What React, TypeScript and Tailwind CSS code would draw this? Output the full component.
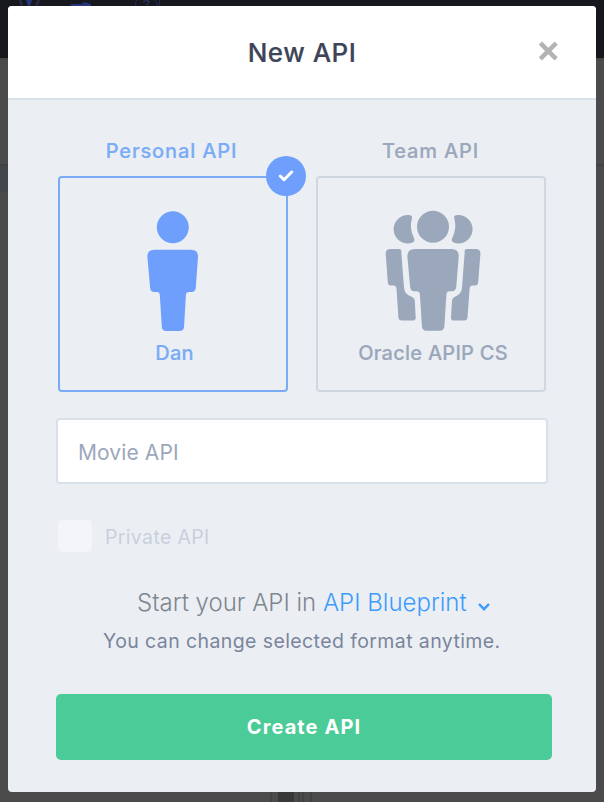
import React from "react";

function PersonIcon() {
  return (
    <svg width="52" height="122" viewBox="0 0 52 122" fill="#6e9ffc">
      <circle cx="25.8" cy="17.3" r="16" />
      <path d="M7.5 39.7H44Q51.4 39.7 51 47L48.8 77.5Q48.3 82 44.6 82H42Q39.1 82 38.9 85L37.1 116.5Q36.8 121 32.5 121H19.3Q15 121 14.8 116.5L12.8 85Q12.6 82 9.8 82H7.3Q3.4 82 3.1 77.5L.4 47Q0 39.7 7.5 39.7Z" />
    </svg>
  );
}

function TeamIcon() {
  return (
    <svg width="96" height="122" viewBox="0 0 96 122" fill="#9ba7bb">
      <circle cx="48" cy="16.8" r="16" />
      <path d="M29.8 39H66.4Q74.2 39 73.7 47L71.3 76.5Q70.8 81.3 67 81.3H64.6Q61.6 81.3 61.4 84.5L59.4 116Q59.1 120.7 54.8 120.7H41.4Q37.2 120.7 36.9 116L34.9 84.5Q34.7 81.3 31.6 81.3H29.4Q25.4 81.3 25.1 76.5L22.4 47Q22 39 29.8 39Z" />
      <path d="M23.5 5Q28.2 5 26.8 9Q24.3 18.5 28.7 27.5Q31 31.3 26.5 32.9A14.2 14.2 0 1 1 23.5 5Z" />
      <path d="M72.7 5Q68 5 69.4 9Q71.9 18.5 67.5 27.5Q65.2 31.3 69.7 32.9A14.2 14.2 0 1 0 72.7 5Z" />
      <path d="M5.2 39H13.5Q17 39 16.3 42.3L19 77.5Q19.5 84.2 26 86.5Q29.6 87.8 29.8 91L30.7 107.5Q30.8 110.5 27.5 110.5H16.8Q13.7 110.5 13.4 107.5L11.5 78.5Q11.3 76 9.2 75.6L5.7 75.4Q3 75.2 2.8 72.2L.7 44Q.5 39 5.2 39Z" />
      <path d="M91 39H82.5Q79 39 79.7 42.3L77 77.5Q76.5 84.2 70.4 86.5Q67.2 87.8 67 91L66 107.5Q65.9 110.5 69.2 110.5H79.2Q82.3 110.5 82.5 107.5L84.6 78.5Q84.8 76 86.8 75.6L90.3 75.4Q93 75.2 93.2 72.2L95.4 44Q95.6 39 91 39Z" />
    </svg>
  );
}

function Backdrop() {
  return (
    <div className="absolute inset-0 flex flex-col overflow-hidden bg-[#4b4b4b]">
      <div className="h-[58px] shrink-0 bg-[#17181d]">
        <svg width="200" height="8" viewBox="0 0 200 8" fill="none" stroke="#202a58">
          <path d="M20 0L22 6M39 0L36 6" stroke="#242942" strokeWidth="3" />
          <path d="M26 0H32L30 6H28Z" fill="#26357c" stroke="none" />
          <path d="M70 4H82L84 2L91 4V6H72Z" fill="#26357c" stroke="none" />
          <path d="M137 0Q134 3 136 6M155 0Q158 3 157 6M159.500 0V6" />
          <path d="M143 2Q145 0 149 1Q149 4 146 5" stroke="#2c3a80" />
        </svg>
      </div>
      <div className="h-[106px] shrink-0 border-t-2 border-[#464646]" />
      <div className="flex h-[28px] shrink-0 justify-between border-t-2 border-[#424242]">
        <div className="w-2 bg-[#42484b]" />
      </div>
      <div className="grow" />
      <div className="flex h-[10px] shrink-0 pl-[270px]">
        <div className="w-[2px] bg-[#434343]" />
        <div className="ml-[6px] w-4 bg-[#383838]" />
        <div className="ml-1 w-[2px] bg-[#424242]" />
        <div className="ml-[2px] w-[2px] bg-[#424242]" />
        <div className="ml-[6px] w-[2px] bg-[#424242]" />
      </div>
    </div>
  );
}

export default function App() {
  return (
    <div className="relative h-[802px] w-[604px] overflow-hidden px-2 pt-[6px] font-['Inter',sans-serif]">
      <Backdrop />
      <div className="relative flex h-[786px] flex-col overflow-hidden rounded-[4px] bg-[#ebeff4]">
        <header className="relative flex h-[94px] shrink-0 items-center justify-center border-b-2 border-[#d8e0e9] bg-white pt-[2px]">
          <h1 className="text-[26px] leading-8 font-medium tracking-[0.5px] text-[#3e4457] [-webkit-text-stroke:0.2px_#3e4457]">New API</h1>
          <button className="absolute top-[35px] right-[38px]" aria-label="Close">
            <svg width="20" height="20" viewBox="0 0 20 20" stroke="#b3b3b3" strokeWidth="4.500" strokeLinecap="square">
              <path d="M4 3.700L16.600 16.300M16.600 3.700L4 16.300" />
            </svg>
          </button>
        </header>

        <main className="flex flex-col px-12">
          <div className="flex gap-7 px-[2px] pt-[36px]">
            <section className="w-[230px]">
              <h2 className="h-10 pr-[3px] text-center text-[20px] leading-[30px] font-medium tracking-[0.85px] text-[#7aacf6] [-webkit-text-stroke:0.2px_#7aacf6]">Personal API</h2>
              <div className="relative flex h-[216px] flex-col items-center rounded-[4px] border-2 border-[#7aacf6] pt-[32px]">
                <PersonIcon />
                <p className="mt-[6px] pl-[3px] text-[20px] leading-[30px] font-medium tracking-[0.2px] text-[#7aacf6] [-webkit-text-stroke:0.2px_#7aacf6]">Dan</p>
                <span className="absolute -top-[22px] -right-[20px] flex size-10 items-center justify-center rounded-full bg-[#6e9ffc]">
                  <svg width="16" height="12" viewBox="0 0 16 12" fill="none" stroke="white" strokeWidth="3" strokeLinecap="round" strokeLinejoin="round">
                    <path d="M2.300 6L6 9.700L13.700 2" />
                  </svg>
                </span>
              </div>
            </section>
            <section className="w-[230px]">
              <h2 className="h-10 pr-[1px] text-center text-[20px] leading-[30px] font-medium tracking-[0.85px] text-[#9ba7bb] [-webkit-text-stroke:0.2px_#9ba7bb]">Team API</h2>
              <div className="flex h-[216px] flex-col items-center rounded-[4px] border-2 border-[#cfd8e1] pt-[32px]">
                <div className="pl-[4px]"><TeamIcon /></div>
                <p className="mt-[6px] pl-[4px] text-[20px] leading-[30px] font-medium tracking-[0.25px] text-[#9ba7bb] [-webkit-text-stroke:0.2px_#9ba7bb]">Oracle APIP CS</p>
              </div>
            </section>
          </div>

          <div className="mt-[26px] flex h-[66px] w-[492px] items-center rounded-[4px] border-2 border-[#d8e0e9] bg-white px-5 pt-1 text-[21px] tracking-[0.1px] text-[#9ba7bb]">Movie API</div>

          <label className="mt-9 flex h-8 items-center gap-3 pl-[2px]">
            <span className="h-8 w-[34px] rounded-[5px] bg-[#f3f5f9]" />
            <span className="pt-[2px] pl-[1px] text-[19.5px] leading-[30px] tracking-[0.35px] text-[#c9cfdc]">Private API</span>
          </label>

          <div className="mt-[35px] flex h-8 items-center pl-[81px] text-[24px] leading-8 font-light text-[#80858f]">
            <span className="whitespace-pre">Start your API in </span>
            <span className="text-[#3d9bfb]">API Blueprint</span>
            <svg className="mt-[8px] ml-[10px]" width="14" height="10" viewBox="0 0 14 10" fill="none" stroke="#3d9bfb" strokeWidth="2.500">
              <path d="M2 2L7 7.200L12 2" />
            </svg>
          </div>
          <p className="mt-[7px] pl-[47px] text-[19.5px] leading-[30px] tracking-[0.4px] whitespace-nowrap text-[#7a859c]">You can change selected format anytime.</p>

          <button className="mt-[38px] h-[66px] w-[496px] rounded-[5px] bg-[#4acb97] text-[20px] font-bold tracking-[1.1px] text-white">Create API</button>
        </main>
      </div>
    </div>
  );
}
